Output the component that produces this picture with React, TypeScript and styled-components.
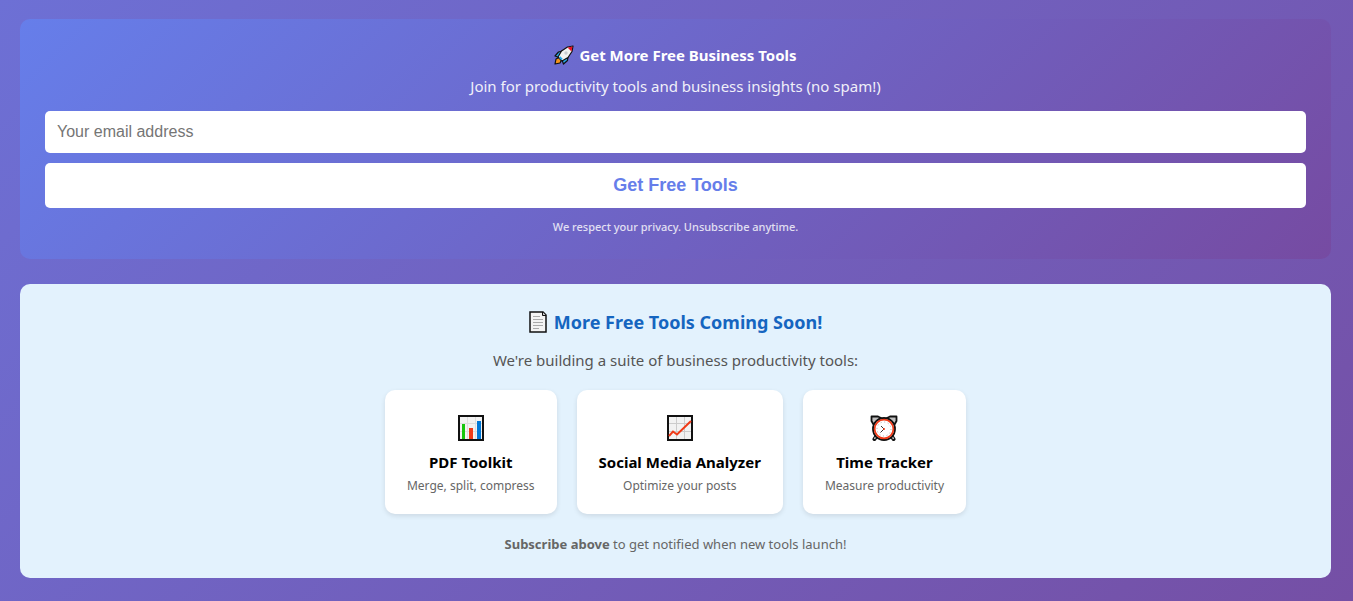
import React from 'react';
import styled, { createGlobalStyle } from 'styled-components';

const GlobalStyle = createGlobalStyle`
  * { box-sizing: border-box; }
  body {
    margin: 0;
    font-family: "Segoe UI", "Noto Sans", "Open Sans", sans-serif;
    background: #7059b8;
  }
  h3, h4, p { margin: 0; }
`;

const Page = styled.main`
  min-height: 100vh;
  padding: 19px 22px 23px 20px;
  display: flex;
  flex-direction: column;
  gap: 25px;
  background: linear-gradient(135deg, #6d70d5 0%, #754fa5 100%);
`;

const Panel = styled.section`
  display: flex;
  flex-direction: column;
  align-items: center;
  padding: 25px;
  border-radius: 10px;
  text-align: center;
`;

const SignupPanel = styled(Panel)`
  padding-bottom: 23px;
  background: linear-gradient(135deg, #667eea 0%, #764ba2 100%);
  color: #fff;
`;

const SignupTitle = styled.h3`
  display: flex;
  align-items: center;
  gap: 5px;
  font-size: 15px;
  line-height: 22px;
  font-weight: 700;
`;

const SignupText = styled.p`
  margin-top: 8px;
  font-size: 15px;
  line-height: 24px;
  opacity: 0.9;
`;

const SignupForm = styled.form`
  align-self: stretch;
  display: flex;
  flex-direction: column;
  gap: 10px;
  margin-top: 13px;
`;

const EmailInput = styled.input`
  width: 100%;
  height: 42px;
  padding: 0 12px;
  border: 0;
  border-radius: 5px;
  background: #fff;
  font-family: "Liberation Sans", Arial, sans-serif;
  font-size: 16px;
  &::placeholder { color: #757575; opacity: 1; }
`;

const SubmitButton = styled.button`
  width: 100%;
  height: 45px;
  padding: 0 12px;
  border: 0;
  border-radius: 5px;
  background: #fff;
  color: #667eea;
  font-family: "Liberation Sans", Arial, sans-serif;
  font-size: 18px;
  font-weight: 700;
  cursor: pointer;
`;

const Privacy = styled.p`
  margin-top: 10px;
  font-size: 11px;
  line-height: 18px;
  font-weight: 500;
  opacity: 0.8;
`;

const ToolsPanel = styled(Panel)`
  background: #e3f2fd;
  color: #555;
`;

const ToolsTitle = styled.h3`
  display: flex;
  align-items: center;
  gap: 7px;
  color: #1565c0;
  font-size: 18px;
  line-height: 26px;
  font-weight: 700;
`;

const ToolsText = styled.p`
  margin-top: 13px;
  font-size: 15px;
  line-height: 24px;
`;

const ToolList = styled.div`
  display: flex;
  flex-wrap: wrap;
  justify-content: center;
  gap: 20px;
  margin-top: 18px;
`;

const ToolCard = styled.article`
  display: flex;
  flex-direction: column;
  align-items: center;
  padding: 25px 22px 18px;
  border-radius: 10px;
  background: #fff;
  box-shadow: 0 2px 5px rgba(0, 0, 0, 0.1);
`;

const ToolName = styled.h4`
  margin-top: 9px;
  color: #000;
  font-size: 15px;
  line-height: 24px;
  font-weight: 700;
`;

const ToolNote = styled.p`
  margin-top: 2px;
  color: #666;
  font-size: 12px;
  line-height: 20px;
`;

const Footnote = styled.p`
  margin-top: 21px;
  color: #666;
  font-size: 13px;
  line-height: 18px;
`;

const Rocket = () => (
  <svg width="20" height="20" viewBox="0 0 20 20" aria-hidden="true">
    <path d="M5 12.500 2 14 1 19l5-1 1.500-3Z" fill="#f7941d" stroke="#111" strokeWidth="1.2" strokeLinejoin="round" />
    <path d="M8 6 4.500 7 1 11l4 1.500ZM14 12l-.5 3.500L9.500 19l-1.500-4Z" fill="#28a8ea" stroke="#111" strokeWidth="1.2" strokeLinejoin="round" />
    <path d="M19 1 13.500 2 7.500 6 4 12 8 16 14 12.500 18 6.500Z" fill="#f2f2f2" stroke="#111" strokeWidth="1.2" strokeLinejoin="round" />
    <path d="m18.500 1.500-5 1 4 4Z" fill="#e81224" />
    <circle cx="12" cy="8" r="1.700" fill="#c8ccd0" />
    <path d="m5.500 12 2.500 2.500" stroke="#28a8ea" strokeWidth="2" />
  </svg>
);

const Document = () => (
  <svg width="18" height="22" viewBox="0 0 18 22" aria-hidden="true">
    <path d="M1 1h13l3 3v17H1Z" fill="#f4f4f4" stroke="#111" strokeWidth="1.500" />
    <path d="M13.500 1v3.500H17" fill="#ccc" stroke="#111" />
    <path d="M4 5.500h7M4 8.500h10M4 11.500h10M4 14.500h10M4 17.500h6" stroke="#aaa" />
  </svg>
);

const BarChart = () => (
  <svg width="26" height="26" viewBox="0 0 26 26" aria-hidden="true">
    <rect x="1" y="1" width="24" height="24" fill="#f2f2f2" stroke="#111" strokeWidth="2" />
    <path d="M9.500 2v22M17.500 2v22M2 8.500h22M2 16.500h22" stroke="#ddd" />
    <path d="M4 9h3v15H4Z" fill="#16c60c" />
    <path d="M11 13h4v11h-4Z" fill="#f03a17" />
    <path d="M19 6h4v18h-4Z" fill="#0078d7" />
  </svg>
);

const LineChart = () => (
  <svg width="26" height="26" viewBox="0 0 26 26" aria-hidden="true">
    <rect x="1" y="1" width="24" height="24" fill="#f2f2f2" stroke="#111" strokeWidth="2" />
    <path d="M9.500 2v22M17.500 2v22M2 8.500h22M2 16.500h22" stroke="#ccc" />
    <path d="m2 21 4-4.500 4 3L24 6" fill="none" stroke="#f03a17" strokeWidth="2" />
  </svg>
);

const AlarmClock = () => (
  <svg width="28" height="26" viewBox="0 0 28 26" aria-hidden="true">
    <path d="m6.500 21-2 3M21.500 21l2 3" stroke="#111" strokeWidth="4" strokeLinecap="round" />
    <path d="m6 21-1.500 3M22 21l1.500 3" stroke="#ccc" strokeWidth="1.500" />
    <path d="M3.500 9.500 1.500 6V1.500H8L11 3ZM24.500 9.500l2-3.500V1.500H20L17 3Z" fill="#c0c0c0" stroke="#111" strokeWidth="1.800" strokeLinejoin="round" />
    <circle cx="14" cy="14" r="11" fill="#fff" stroke="#111" strokeWidth="1.800" />
    <circle cx="14" cy="14" r="9.400" fill="none" stroke="#f03a17" strokeWidth="1.800" />
    <circle cx="14" cy="14" r="7" fill="none" stroke="#aaa" strokeDasharray="1 2.665" />
    <path d="m11 11 3 3-3.500 3.500" fill="none" stroke="#333" />
    <circle cx="14" cy="14" r="1" fill="#f03a17" />
  </svg>
);

const tools = [
  { name: 'PDF Toolkit', note: 'Merge, split, compress', Icon: BarChart },
  { name: 'Social Media Analyzer', note: 'Optimize your posts', Icon: LineChart },
  { name: 'Time Tracker', note: 'Measure productivity', Icon: AlarmClock },
];

export default function App() {
  return (
    <>
      <GlobalStyle />
      <Page>
        <SignupPanel>
          <SignupTitle><Rocket />Get More Free Business Tools</SignupTitle>
          <SignupText>Join for productivity tools and business insights (no spam!)</SignupText>
          <SignupForm onSubmit={(e: React.FormEvent) => e.preventDefault()}>
            <EmailInput type="email" placeholder="Your email address" aria-label="Your email address" />
            <SubmitButton type="submit">Get Free Tools</SubmitButton>
          </SignupForm>
          <Privacy>We respect your privacy. Unsubscribe anytime.</Privacy>
        </SignupPanel>
        <ToolsPanel>
          <ToolsTitle><Document />More Free Tools Coming Soon!</ToolsTitle>
          <ToolsText>We're building a suite of business productivity tools:</ToolsText>
          <ToolList>
            {tools.map(({ name, note, Icon }) => (
              <ToolCard key={name}>
                <Icon />
                <ToolName>{name}</ToolName>
                <ToolNote>{note}</ToolNote>
              </ToolCard>
            ))}
          </ToolList>
          <Footnote><strong>Subscribe above</strong> to get notified when new tools launch!</Footnote>
        </ToolsPanel>
      </Page>
    </>
  );
}
